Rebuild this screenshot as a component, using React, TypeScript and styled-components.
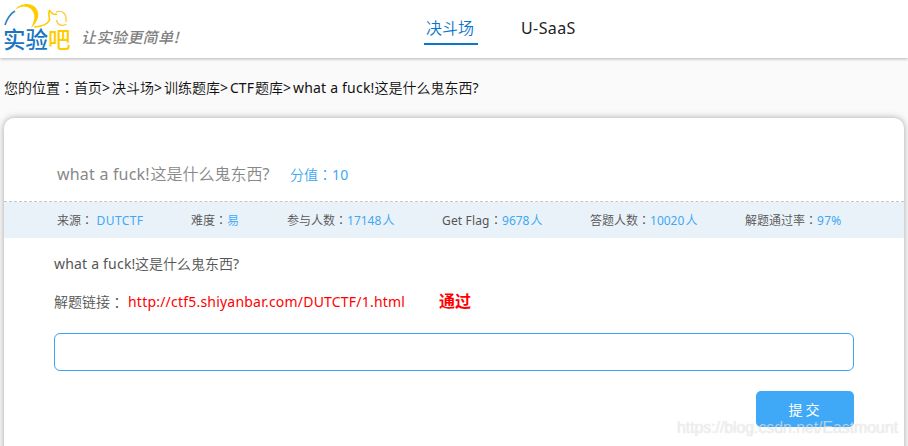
import React from "react";
import styled, { createGlobalStyle } from "styled-components";

const GlobalStyle = createGlobalStyle`
  * { box-sizing: border-box; }
  html, body { margin: 0; padding: 0; background: #fafafa; overflow: hidden; }
  body {
    font-family: "Noto Sans", "Noto Sans CJK SC", sans-serif;
    font-size: 14px;
    font-weight: 350;
    color: #111;
  }
`;

const Page = styled.div`
  position: relative;
  width: 908px;
  height: 446px;
  overflow: hidden;
  display: flex;
  flex-direction: column;
  white-space: nowrap;
`;

const Header = styled.header`
  height: 58px;
  flex: none;
  display: flex;
  background: #fff;
  box-shadow: 0 1px 3px rgba(0, 0, 0, 0.28);
`;

const Brand = styled.div`
  width: 68px;
  margin-left: 3px;
  display: flex;
  flex-direction: column;
`;

const LogoMark = styled.svg`
  display: block;
  width: 68px;
  height: 28px;
  flex: none;
  overflow: visible;
`;

const LogoText = styled.div`
  font-family: "Noto Sans CJK SC", sans-serif;
  font-size: 22.5px;
  font-weight: 500;
  line-height: 24px;
  margin-top: -2px;
  color: #1976c4;
`;

const LogoAccent = styled.span`
  color: #fc0;
`;

const Slogan = styled.div`
  width: 100px;
  margin: 26px 0 0 10px;
  font-family: "Noto Sans CJK SC", sans-serif;
  font-size: 15px;
  font-weight: 500;
  font-style: italic;
  line-height: 22px;
  letter-spacing: 0.4px;
  color: #808080;
`;

const Nav = styled.nav`
  display: flex;
  margin-left: 243px;
`;

const NavItem = styled.a<{ $active?: boolean }>`
  height: 45px;
  padding: 16px 3px 0 2px;
  margin-right: 41px;
  width: ${(p) => (p.$active ? "54px" : "60px")};
  font-size: 16px;
  line-height: 24px;
  color: ${(p) => (p.$active ? "#0b76cc" : "#222")};
  border-bottom: ${(p) => (p.$active ? "2px solid #0b76cc" : "none")};
`;

const Latin = styled.span<{ $w?: number; $ls?: number }>`
  display: inline-block;
  width: ${(p) => (p.$w ? `${p.$w}px` : "auto")};
  font-weight: 400;
  letter-spacing: ${(p) => p.$ls ?? 0}px;
`;

const ColonGlyph = styled.span`
  font-family: "Noto Sans CJK TC", sans-serif;
`;

const Colon = () => <ColonGlyph lang="zh-TW">：</ColonGlyph>;

const Breadcrumb = styled.div`
  height: 60px;
  flex: none;
  padding: 18px 0 0 4px;
  line-height: 22px;
`;

const Card = styled.main`
  width: 900px;
  height: 345px;
  flex: none;
  margin-left: 4px;
  background: #fff;
  border-radius: 10px;
  box-shadow: 0 0 7px rgba(0, 0, 0, 0.34);
`;

const TitleRow = styled.div`
  height: 84px;
  display: flex;
  padding: 44px 0 0 53px;
  line-height: 24px;
  border-bottom: 1px dashed #c4c6c8;
`;

const Title = styled.div`
  width: 233px;
  font-size: 16px;
  color: #888;
`;

const Score = styled.div`
  font-size: 14px;
  line-height: 25px;
  color: #3da8f5;
`;

const Stats = styled.div`
  height: 36px;
  display: grid;
  grid-template-columns: 134px 96px 155px 148px 155px 1fr;
  padding-left: 53px;
  font-size: 12px;
  line-height: 36px;
  color: #555;
  background: #eaf2f9;
`;

const Value = styled.span`
  color: #3da8f5;
`;

const Body = styled.div`
  width: 850px;
  padding: 15px 0 0 50px;
  display: flex;
  flex-direction: column;
  color: #555;
`;

const Line = styled.div`
  display: flex;
  height: 38px;
  line-height: 22px;
`;

const Link = styled.a`
  margin-left: 4px;
  color: #f00;
`;

const Passed = styled.span`
  margin-left: 34px;
  font-size: 16px;
  font-weight: 700;
  line-height: 20px;
  color: #f00;
`;

const Answer = styled.input`
  width: 800px;
  height: 38px;
  margin-top: 4px;
  border: 1px solid #3da5ee;
  border-radius: 6px;
  background: #fff;
  outline: none;
`;

const Submit = styled.button`
  align-self: flex-end;
  width: 98px;
  height: 36px;
  margin-top: 20px;
  padding: 0 2px 0 0;
  border: 0;
  border-radius: 5px;
  background: #3fa9f8;
  color: #fff;
  font: 400 14px "Noto Sans CJK SC", sans-serif;
`;

const Watermark = styled.div`
  position: absolute;
  left: 677px;
  top: 418px;
  font: 400 16px/20px "Liberation Sans", sans-serif;
  letter-spacing: -0.1px;
  color: rgba(255, 255, 255, 0.5);
  text-shadow: 0 0 1px rgba(150, 150, 150, 0.4);
`;

type Stat = { label: React.ReactNode; value: React.ReactNode };

const stats: Stat[] = [
  { label: "来源", value: <Latin $w={54} $ls={0.4}>&nbsp;DUTCTF</Latin> },
  { label: "难度", value: "易" },
  { label: "参与人数", value: <><Latin $w={35.5}>17148</Latin>人</> },
  { label: <Latin $w={48} $ls={0.15}>Get Flag</Latin>, value: <><Latin $w={28.5}>9678</Latin>人</> },
  { label: "答题人数", value: <><Latin $w={35.5}>10020</Latin>人</> },
  { label: "解题通过率", value: <Latin $ls={0.3}>97%</Latin> },
];

export default function App() {
  return (
    <>
      <GlobalStyle />
      <Page lang="zh-CN">
        <Header>
          <Brand>
            <LogoMark viewBox="0 0 68 28" fill="none">
              <path d="M2 25C4 19 7 14 12 11" stroke="#2a82c8" strokeWidth="1.6" />
              <path
                d="M12 10C17 3 28 2 33 8C38 15 34 23 28 28C32 20 33 14 28 9C23 5 17 6 12 10Z"
                fill="#fc0"
              />
              <path
                d="M31 27C39 26.500 45 24 46.500 20C46.500 17 45 13 46.500 10.500L50 14L54 14.500"
                stroke="#fc0"
                strokeWidth="1.6"
              />
              <path
                d="M53 12C59 10 64 13 63 22M53.500 20C54.500 25 59 27 63.500 24"
                stroke="#fbd04a"
                strokeWidth="1.4"
              />
            </LogoMark>
            <LogoText>实验<LogoAccent>吧</LogoAccent></LogoText>
          </Brand>
          <Slogan>让实验更简单!</Slogan>
          <Nav>
            <NavItem $active>决斗场</NavItem>
            <NavItem><Latin $ls={0.4}>U-SaaS</Latin></NavItem>
          </Nav>
        </Header>
        <Breadcrumb>
          您的位置<Colon />首页<Latin $w={10}>&gt;</Latin>决斗场
          <Latin $w={10}>&gt;</Latin>训练题库<Latin $w={10}>&gt;</Latin>
          <Latin $w={25}>CTF</Latin>题库<Latin $w={10}>&gt;</Latin>
          <Latin $w={81.5} $ls={0.2}>what a fuck!</Latin>这是什么鬼东西<Latin>?</Latin>
        </Breadcrumb>
        <Card>
          <TitleRow>
            <Title><Latin $w={93.5} $ls={0.2}>what a fuck!</Latin>这是什么鬼东西<Latin>?</Latin></Title>
            <Score>分值<Colon /><Latin $ls={0.3}>10</Latin></Score>
          </TitleRow>
          <Stats>
            {stats.map((s, i) => (
              <div key={i}>
                {s.label}<Colon /><Value>{s.value}</Value>
              </div>
            ))}
          </Stats>
          <Body>
            <Line><Latin $w={81} $ls={0.2}>what a fuck!</Latin>这是什么鬼东西<Latin>?</Latin></Line>
            <Line>
              解题链接<Colon />
              <Link><Latin $w={277} $ls={0.21}>http://ctf5.shiyanbar.com/DUTCTF/1.html</Latin></Link>
              <Passed>通过</Passed>
            </Line>
            <Answer aria-label="答案" />
            <Submit>提 交</Submit>
          </Body>
        </Card>
        <Watermark>https://blog.csdn.net/Eastmount</Watermark>
      </Page>
    </>
  );
}
